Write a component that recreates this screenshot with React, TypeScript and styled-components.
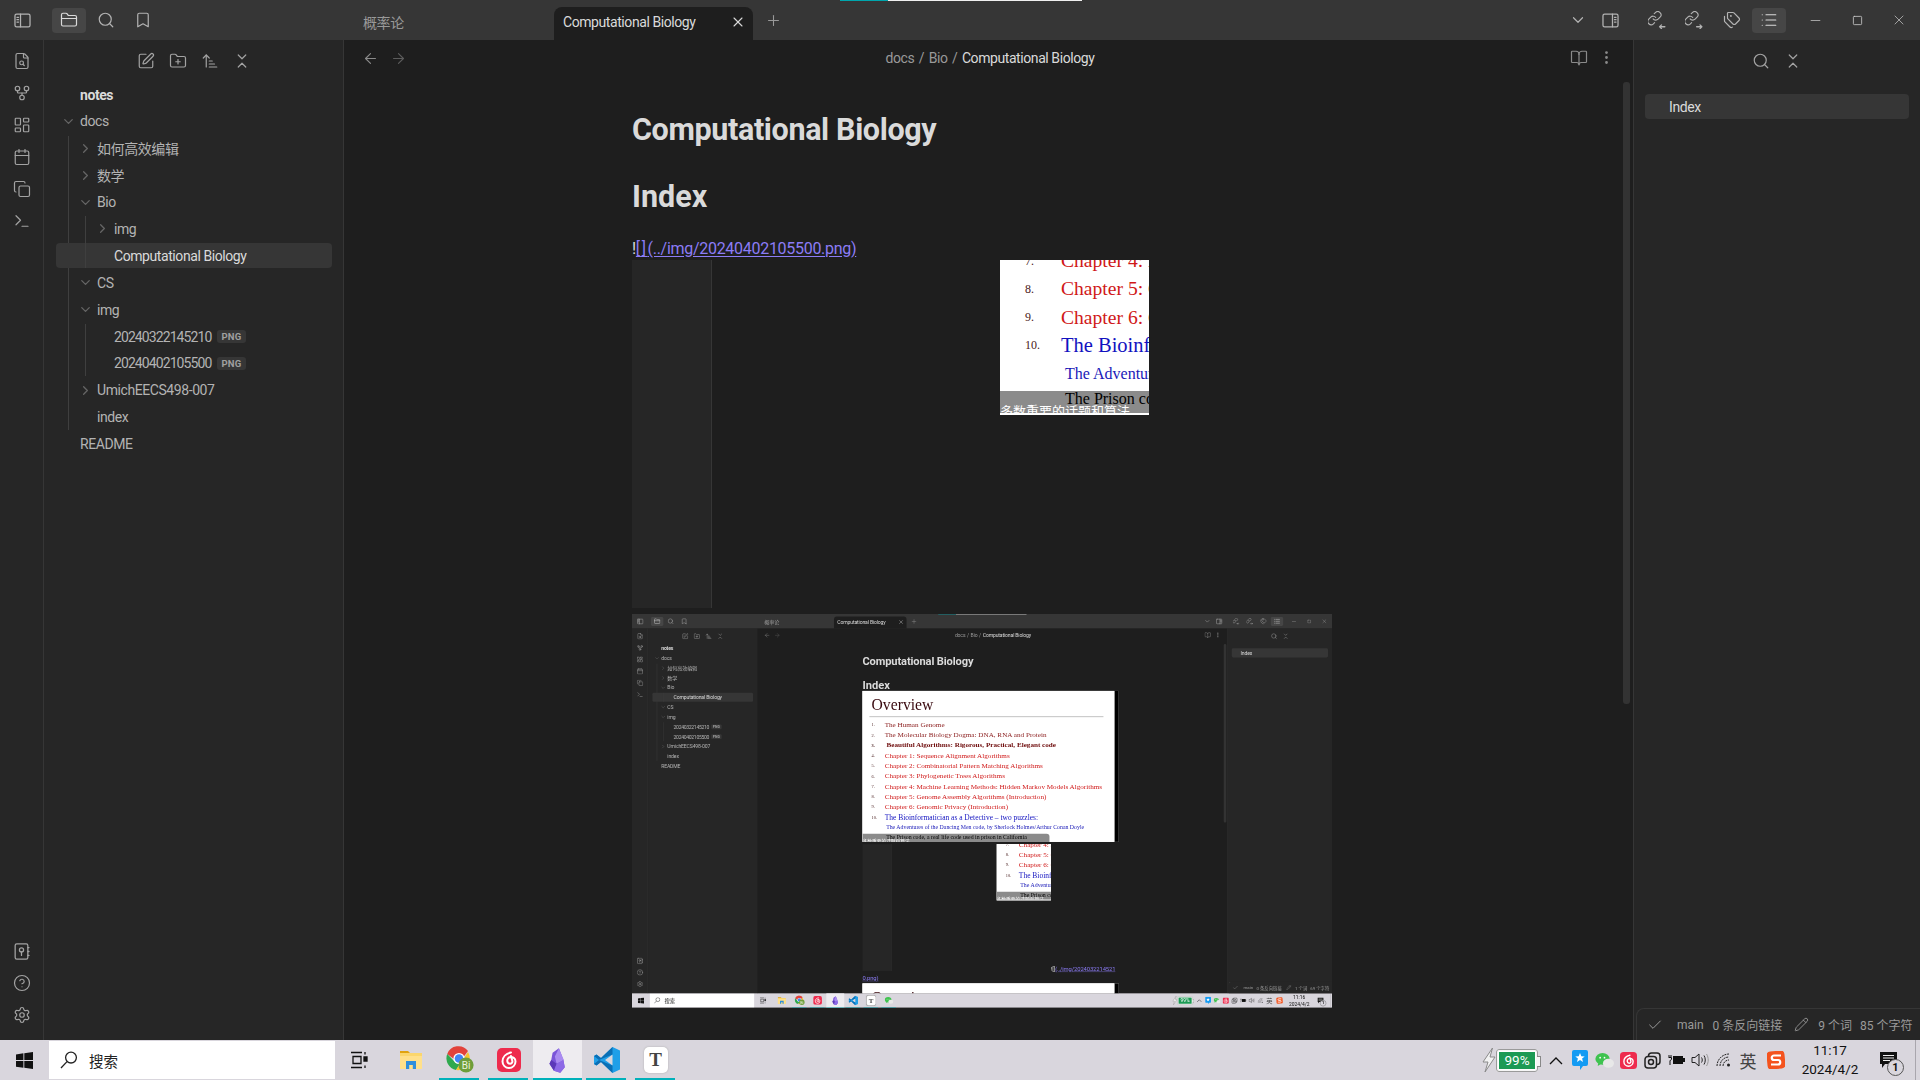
import React from "react";
import styled, { createGlobalStyle } from "styled-components";
import {
  ArrowLeft, ArrowRight, ArrowUpNarrowWide, Bookmark, BookOpen, Calendar, Check, ChevronDown, ChevronRight,
  ChevronsDownUp, CircleHelp, Copy, EllipsisVertical, FileSearch, FolderClosed, FolderPlus, GitFork,
  LayoutDashboard, List, Minus, Pencil, Plus, Search, Settings, Square, SquarePen, Tags, Terminal, X,
} from "lucide-react";

const SANS = `Roboto, "Noto Sans CJK SC", sans-serif`;

const Global = createGlobalStyle`
  html, body { margin: 0; padding: 0; background: #1e1e1e; overflow: hidden; }
  * { box-sizing: border-box; }
`;

/* ---------- window shell ---------- */
const WindowRoot = styled.div`
  width: 1920px; height: 1080px; display: flex; flex-direction: column; overflow: hidden; position: relative;
  font-family: ${SANS}; font-size: 14px; letter-spacing: -0.03em; color: #b3b3b3; background: #1e1e1e;
`;
const TitleBar = styled.header`
  height: 40px; flex: none; display: flex; align-items: flex-start; background: #363636; position: relative;
`;
const CaptureLine = styled.div`
  position: absolute; top: 0; left: 840px; width: 242px; height: 1px;
  background: linear-gradient(90deg, #00a6ad 0 48px, #f0f0f0 48px);
`;
const LeftTools = styled.div`
  width: 344px; flex: none; height: 40px; display: flex; align-items: center; gap: 3px;
`;
const RibbonToggle = styled.div`
  width: 44px; margin-right: 5px; display: flex; justify-content: center; color: #b3b3b3;
`;
const TopBtn = styled.div<{ $active?: boolean }>`
  width: 34px; height: 25px; border-radius: 4px; display: flex; align-items: center; justify-content: center;
  color: ${(p) => (p.$active ? "#dadada" : "#b3b3b3")}; background: ${(p) => (p.$active ? "#464646" : "transparent")};
`;
const Tab = styled.div<{ $active?: boolean }>`
  margin-top: 7px; height: 33px; display: flex; align-items: center; justify-content: space-between;
  padding: 0 7px 3px ${(p) => (p.$active ? "9px" : "19px")}; width: ${(p) => (p.$active ? "199px" : "210px")};
  border-radius: 8px 8px 0 0; background: ${(p) => (p.$active ? "#1e1e1e" : "transparent")};
  color: ${(p) => (p.$active ? "#dadada" : "#999")};
`;
const NewTab = styled.div`
  width: 40px; height: 40px; display: flex; align-items: center; justify-content: center; color: #999;
`;
const RightTools = styled.div`
  margin-left: auto; height: 40px; display: flex; align-items: center;
`;
const SmallBtn = styled.div<{ $gap?: number }>`
  width: 32px; display: flex; justify-content: center; color: #b3b3b3; margin-right: ${(p) => p.$gap ?? 0}px;
`;
const PaneBtns = styled.div`
  display: flex; gap: 3.5px; margin-right: 8px;
`;
const WinCtl = styled.div`
  width: 42px; height: 40px; display: flex; align-items: center; justify-content: center; color: #c8c8c8;
`;
const Body = styled.div`
  flex: 1; min-height: 0; display: flex; position: relative;
`;
const Ribbon = styled.nav`
  width: 44px; flex: none; background: #262626; border-right: 1px solid #363636;
  display: flex; flex-direction: column; padding: 5px 0 9px;
`;
const RibbonBtn = styled.div<{ $push?: boolean }>`
  height: 32px; width: 43px; display: flex; align-items: center; justify-content: center; color: #a3a3a3;
  margin-top: ${(p) => (p.$push ? "auto" : "0")};
`;
const FileSidebar = styled.aside`
  width: 300px; flex: none; background: #262626; border-right: 1px solid #363636; display: flex; flex-direction: column;
`;
const PaneHead = styled.div`
  height: 36px; flex: none; padding-top: 5px; display: flex; justify-content: center; color: #a3a3a3;
`;
const HeadBtn = styled.div`
  width: 32px; height: 32px; display: flex; align-items: center; justify-content: center;
`;
const Tree = styled.div`
  padding: 6px 11px 0 12px; display: flex; flex-direction: column;
`;
const Row = styled.div<{ $depth: number; $sel?: boolean; $root?: boolean }>`
  height: 25px; margin-bottom: 1.9px; flex: none; display: flex; align-items: center; border-radius: 4px; white-space: nowrap;
  padding-left: ${(p) => 3 + p.$depth * 17}px;
  background: ${(p) => (p.$sel ? "#363636" : "transparent")};
  color: ${(p) => (p.$sel || p.$root ? "#dadada" : "#b3b3b3")};
  font-weight: ${(p) => (p.$root ? 700 : 400)};
`;
const Arrow = styled.span`
  width: 18px; margin-right: 3px; flex: none; display: flex; justify-content: center; color: #666;
`;
const DigitName = styled.span`
  letter-spacing: -0.065em;
`;
const Badge = styled.span`
  margin-left: 6px; height: 13px; padding: 0 4px; border-radius: 3px; background: #363636; color: #a0a0a0;
  font-size: 9.5px; font-weight: 700; line-height: 13px; letter-spacing: 0.03em;
`;
const Group = styled.div<{ $x: number }>`
  position: relative; display: flex; flex-direction: column;
  &::before { content: ""; position: absolute; top: 0; bottom: 2px; left: ${(p) => p.$x}px; width: 1px; background: #3f3f3f; }
`;
const Main = styled.main`
  flex: 1; min-width: 0; display: flex; flex-direction: column; background: #1e1e1e;
`;
const ViewHead = styled.div`
  height: 36px; flex: none; display: flex; align-items: center; justify-content: space-between; padding: 0 12px 0 12px;
`;
const NavGroup = styled.div`
  display: flex; color: #8a8a8a;
`;
const NavBtn = styled.div<{ $dim?: boolean }>`
  width: 28px; display: flex; justify-content: center; color: ${(p) => (p.$dim ? "#5c5c5c" : "inherit")};
`;
const Crumbs = styled.div`
  display: flex; gap: 4.5px; margin-left: 3px; color: #999; align-items: center;
`;
const CrumbNow = styled.span`
  color: #dadada;
`;
const ViewBody = styled.div`
  flex: 1; min-height: 0; display: flex;
`;
const Scroller = styled.div`
  flex: 1; min-width: 0; overflow: hidden; display: flex; justify-content: center;
`;
const ScrollGutter = styled.div`
  width: 13px; flex: none; padding: 6px 3px 0 3px;
`;
const ScrollThumb = styled.div<{ $h: number }>`
  height: ${(p) => p.$h}px; border-radius: 3px; background: #333;
`;
const Doc = styled.article`
  width: 700px; flex: none; padding-top: 35px; display: flex; flex-direction: column;
`;
const H1 = styled.h1`
  margin: 0; font-size: 30.5px; line-height: 38px; font-weight: 700; color: #dadada; letter-spacing: -0.012em;
`;
const H2 = styled.h2`
  margin: 29px 0 0; font-size: 30.5px; line-height: 38px; font-weight: 700; color: #dadada; letter-spacing: 0;
`;
const Para = styled.p`
  margin: 0; font-size: 16px; line-height: 25px; color: #dadada; white-space: nowrap; letter-spacing: -0.018em;
`;
const LeadPara = styled(Para)`
  margin-top: 21px; line-height: 23px;
`;
const Brackets = styled.span`
  letter-spacing: 0.1em;
`;
const LinkText = styled.span`
  color: #8c7cf6; text-decoration: underline; text-underline-offset: 2px;
`;
const RightPane = styled.aside`
  width: 287px; flex: none; background: #262626; border-left: 1px solid #363636; display: flex; flex-direction: column;
`;
const OutlineList = styled.div`
  padding: 18px 11px 0 11px;
`;
const OutlineRow = styled.div`
  height: 25px; border-radius: 4px; background: #363636; color: #dadada; display: flex; align-items: center; padding-left: 24px;
`;
const StatusBar = styled.footer`
  position: absolute; right: 0; bottom: 0; width: 284px; height: 32px; border: 1px solid #363636; border-width: 1px 0 0 1px;
  border-top-left-radius: 8px; background: #262626; display: flex; align-items: center; font-size: 12px; color: #9a9a9a;
  padding-left: 10px; white-space: nowrap; letter-spacing: 0;
`;
const StatusCheck = styled.span`
  width: 30px; display: flex; color: #9a9a9a;
`;
const StatusItem = styled.span<{ $gap: number }>`
  display: flex; align-items: center; margin-right: ${(p) => p.$gap}px;
`;

/* ---------- slide picture ---------- */
const SlideFrame = styled.div<{ $top?: number }>`
  width: 703px; flex: none; margin-top: ${(p) => p.$top ?? 0}px; border-right: 12px solid #000; background: #fff;
`;
const SlideBody = styled.div`
  width: 691px; height: 414px; background: #fff; position: relative; overflow: hidden; padding: 14px 0 0 25px;
  font-family: "Liberation Serif", "Noto Sans CJK SC", serif; letter-spacing: 0;
`;
const SlideTitle = styled.div`
  font-size: 43px; line-height: 50px; color: #3a0a10;
`;
const SlideRule = styled.div`
  width: 642px; margin: 5px 0 7px -6px; height: 3px; background: #c8c8c8;
`;
const SlideLine = styled.div<{ $color: string; $bold?: boolean; $size?: number; $indent?: number; $over?: boolean }>`
  height: 28.2px; display: flex; align-items: center; white-space: pre; color: ${(p) => p.$color};
  font-size: ${(p) => p.$size ?? 19.6}px; font-weight: ${(p) => (p.$bold ? 700 : 400)};
  padding-left: ${(p) => p.$indent ?? 0}px; position: ${(p) => (p.$over ? "relative" : "static")}; z-index: ${(p) => (p.$over ? 2 : 0)};
  margin-top: ${(p) => (p.$over ? "-3px" : "0")};
`;
const SlideNum = styled.span`
  width: 36px; flex: none; font-size: 12px; color: #4a2020;
`;
const SlideStrip = styled.div`
  position: absolute; left: 0; bottom: 0; width: 513px; height: 22px; background: #8b8b8b; border-top-right-radius: 8px;
  color: #fff; font-size: 13px; line-height: 14px; padding-top: 14px; white-space: nowrap; overflow: hidden;
`;
const CropShot = styled.div`
  width: 517px; height: 348px; flex: none; display: flex; align-items: flex-start; align-self: flex-start;
`;
const CropPanel = styled.div`
  width: 80px; height: 348px; flex: none; background: #262626; border-right: 1px solid #363636;
`;
const CropWindow = styled.div`
  width: 149px; height: 155px; flex: none; margin-left: 288px; overflow: hidden; background: #fff;
`;
const CropInner = styled.div`
  margin: -261px 0 0 0;
`;
const InlineRow = styled.div`
  height: 354.5px; flex: none; display: flex; align-items: flex-end; margin-top: 6px;
`;
const MiniViewport = styled.div`
  width: 700px; height: 394px; margin-top: 6px; flex: none; overflow: hidden;
`;
const MiniScale = styled.div`
  width: 1920px; height: 1080px; transform: scale(0.3646); transform-origin: 0 0; filter: blur(0.35px);
`;

/* ---------- taskbar ---------- */
const Taskbar = styled.footer`
  height: 40px; flex: none; background: #d9d6dd; display: flex; align-items: stretch; color: #111; letter-spacing: 0; overflow: hidden;
`;
const WinBtn = styled.div`
  width: 49px; flex: none; display: flex; align-items: center; justify-content: center;
`;
const SearchBox = styled.div`
  width: 286px; flex: none; margin: 1px 0; background: #fff; display: flex; align-items: center; padding-left: 11px; gap: 11px;
  font-size: 14.5px; color: #222;
`;
const TaskView = styled.div`
  width: 48px; flex: none; display: flex; align-items: center; justify-content: center; margin-right: 3px;
`;
const AppSlot = styled.div<{ $run?: boolean; $active?: boolean }>`
  width: 49px; flex: none; display: flex; align-items: center; justify-content: center; position: relative;
  background: ${(p) => (p.$active ? "#eeecf0" : "transparent")};
  &::after {
    content: ""; position: absolute; bottom: 0; height: 2px; background: #00b1ba;
    display: ${(p) => (p.$run ? "block" : "none")}; left: ${(p) => (p.$active ? "0" : "4px")}; right: ${(p) => (p.$active ? "0" : "5px")};
  }
`;
const TyporaTile = styled.div`
  width: 24px; height: 26px; border-radius: 5px; background: #fff; box-shadow: 0 0 2px #aaa; display: flex; align-items: center; justify-content: center;
  font: 700 19px "Liberation Serif", serif; color: #444;
`;
const Tray = styled.div`
  margin-left: auto; display: flex; align-items: center;
`;
const BatteryWrap = styled.div`
  width: 48px; display: flex; align-items: center;
`;
const BatteryCase = styled.div`
  width: 42px; height: 23px; border: 2px solid #f6f6f6; outline: 1px solid #9a9a9a; outline-offset: -1px; border-radius: 3px; background: #fff; padding: 1px; position: relative;
  &::after { content: ""; position: absolute; right: -5px; top: 5px; width: 3px; height: 9px; background: #f6f6f6; border: 1px solid #888; border-left: 0; }
`;
const BatteryFill = styled.div`
  width: 100%; height: 100%; background: #1c9a54; color: #fff; font-size: 13.5px; line-height: 17px; text-align: center;
`;
const TrayItem = styled.div<{ $gap?: number }>`
  width: 24px; flex: none; display: flex; align-items: center; justify-content: center; margin-left: ${(p) => p.$gap ?? 0}px;
`;
const ImeGlyph = styled.span`
  font-size: 17px; color: #444;
`;
const Clock = styled.div`
  width: 76px; margin-left: 4px; flex: none; text-align: center; font-size: 13.5px; line-height: 19px; color: #111;
`;
const Notify = styled.div`
  width: 40px; flex: none; display: flex; align-items: center; justify-content: center; position: relative;
`;
const NotifyCount = styled.span`
  position: absolute; left: 19px; top: 7px; width: 17px; height: 17px; border: 1px solid #555; border-radius: 50%; font-size: 11px; font-weight: 700;
  display: flex; align-items: center; justify-content: center; background: #d9d6dd;
`;
const TrayEnd = styled.div`
  width: 5px; margin-left: 7px; height: 100%; border-left: 1px solid #a9a6ad;
`;

/* ---------- drawings ---------- */
const SidebarIcon = ({ right }: { right?: boolean }) => (
  <svg width="19" height="19" viewBox="0 0 24 24" fill="none" stroke="currentColor" strokeWidth="1.6" strokeLinecap="round">
    <rect x="2.5" y="4" width="19" height="16" rx="2" />
    {right ? (
      <path d="M14.5 4v16M17 8h2M17 11h2M17 14h2" />
    ) : (
      <path d="M9.5 4v16M5 8h2M5 11h2M5 14h2" />
    )}
  </svg>
);
const LinkArrow = ({ out }: { out?: boolean }) => (
  <svg width="18" height="18" viewBox="0 0 24 24" fill="none" stroke="currentColor" strokeWidth="1.7" strokeLinecap="round" strokeLinejoin="round">
    <g transform="translate(-2 -1) scale(0.88)">
      <path d="M10 13a5 5 0 0 0 7.54.54l3-3a5 5 0 0 0-7.07-7.07l-1.72 1.71" />
      <path d="M14 11a5 5 0 0 0-7.54-.54l-3 3a5 5 0 0 0 7.07 7.07l1.71-1.71" />
    </g>
    {out ? <path d="M15.500 21h7M20 18.500l2.500 2.500-2.500 2.500" /> : <path d="M15.500 21h7M18 18.500 15.500 21l2.500 2.500" />}
  </svg>
);
const VaultIcon = () => (
  <svg width="19" height="19" viewBox="0 0 24 24" fill="none" stroke="currentColor" strokeWidth="1.6" strokeLinecap="round">
    <rect x="4" y="2.5" width="16" height="19" rx="2" />
    <circle cx="12" cy="10" r="2.6" />
    <path d="M12 12.6V17M20 7h1.5M20 12h1.5M20 17h1.5" />
  </svg>
);
const WinLogo = () => (
  <svg width="17" height="17" viewBox="0 0 17 17" fill="#111">
    <path d="M0 2.4 7.4 1.3v6.8H0zM8.3 1.2 17 0v8.1H8.3zM0 9h7.4v6.8L0 14.7zM8.3 9H17v8l-8.7-1.2z" />
  </svg>
);
const MirrorSearch = () => (
  <svg width="18" height="18" viewBox="0 0 18 18" fill="none" stroke="#222" strokeWidth="1.3">
    <circle cx="11" cy="6.6" r="5.4" />
    <path d="M7 10.6 1 17" />
  </svg>
);
const TaskViewIcon = () => (
  <svg width="17" height="18" viewBox="0 0 17 18" fill="none" stroke="#111" strokeWidth="1.3">
    <path d="M0 1.5h11M0 16.5h11M2 5.5h8v7H2z" />
    <path d="M14 1v2.5M14 14.5V17" />
    <path d="M13 6h3v4h-3z" fill="#111" />
  </svg>
);
const FolderApp = () => (
  <svg width="24" height="24" viewBox="0 0 24 24">
    <path d="M1 3h8l2 2h-10z" fill="#e0a30f" />
    <path d="M1 5h22v16H1z" fill="#fbd66c" />
    <path d="M1 8h22v13H1z" fill="#ffe08a" />
    <path d="M7 13h10v8h-3.2v-4h-3.6v4H7z" fill="#2f8fdc" />
  </svg>
);
const ChromeApp = () => (
  <svg width="28" height="28" viewBox="0 0 28 28">
    <path d="M1.2 8A12 12 0 0 1 22 5 l-6 8H8z" fill="#e2423a" />
    <path d="M1.2 8A12 12 0 0 0 10 24l5-8-7-1z" fill="#2fa94e" />
    <path d="M22 6A12 12 0 0 1 10 24l6-9z" fill="#f7c52c" />
    <circle cx="13" cy="12.5" r="5.6" fill="#fff" />
    <circle cx="13" cy="12.5" r="4.3" fill="#4285f4" />
    <circle cx="20" cy="19" r="7.6" fill="#6e9e3a" />
    <text x="20" y="23" fontSize="10" fontFamily="Roboto, sans-serif" fill="#e8f2dc" textAnchor="middle">Bi</text>
  </svg>
);
const NeteaseApp = ({ size = 24 }: { size?: number }) => (
  <svg width={size} height={size} viewBox="0 0 24 24" fill="none">
    <rect width="24" height="24" rx="5" fill="#ee2b4d" />
    <path d="M14 4.5C9 5.5 5.5 9 5.5 13.500a6.500 6.500 0 0 0 13 0c0-3-2.500-4.500-4.700-4.500a3.700 3.700 0 0 0-3.500 4.200c.2 1.700 1.500 2.600 2.800 2.600 1.500 0 2.400-1.300 2.300-2.600L14 8" stroke="#fff" strokeWidth="2" strokeLinecap="round" />
  </svg>
);
const ObsidianApp = () => (
  <svg width="18" height="25" viewBox="0 0 20 27">
    <path d="M11 0 4 5 2.500 13 .5 17l5 8 7 2 5-6-1.500-8L13 5z" fill="#7a55d8" />
    <path d="M11 0 6.500 9l2 8 8-4-3.500-8z" fill="#a98bf0" />
    <path d="M2.500 13 .5 17l5 8 3-8z" fill="#5b39b8" />
    <path d="M8.500 17l-3 8 7 2 5-6-1.500-8z" fill="#8d6ae6" />
  </svg>
);
const VSCodeApp = () => (
  <svg width="26" height="26" viewBox="0 0 26 26">
    <path d="M18.500 0 7 11 2.500 7.500 0 9v8l2.500 1.500L7 15l11.500 11L26 22.500v-19zM18.500 7.500v11L11 13z" fill="#1f9fe8" fillRule="evenodd" />
    <path d="M18.500 0 7 11 2.500 7.500 0 9l5 4 13.500-5.500zM0 17l2.500 1.500L7 15l11.500 11v-7.500L5 13z" fill="#0a6fb5" />
  </svg>
);
const WeChatApp = ({ size = 22 }: { size?: number }) => (
  <svg width={size} height={size} viewBox="0 0 24 24">
    <ellipse cx="9.500" cy="10" rx="9" ry="7.500" fill="#3fc34f" />
    <path d="M4 15 3.500 19l4-2.500z" fill="#3fc34f" />
    <ellipse cx="17" cy="15.500" rx="7" ry="5.800" fill="#e8e8e8" />
    <circle cx="6.500" cy="8.500" r="1.100" fill="#fff" />
    <circle cx="12" cy="8.500" r="1.100" fill="#fff" />
  </svg>
);
const Bolt = () => (
  <svg width="14" height="26" viewBox="0 0 14 26" fill="#f2f2f2" stroke="#8a8a8a" strokeWidth="1">
    <path d="M10.500 1 1 15h5L3 25 13 10H8z" />
  </svg>
);
const CaretUp = () => (
  <svg width="14" height="9" viewBox="0 0 14 9" fill="none" stroke="#111" strokeWidth="1.3"><path d="M1 8l6-6 6 6" /></svg>
);
const BlueBubble = () => (
  <svg width="16" height="20" viewBox="0 0 16 20">
    <path d="M2 0h12a2 2 0 0 1 2 2v12a2 2 0 0 1-2 2h-3l-3 4v-4H2a2 2 0 0 1-2-2V2a2 2 0 0 1 2-2z" fill="#149bf3" />
    <path d="M8 3l1.300 3.200 3.400.200-2.600 2.200.900 3.300L8 10l-3 1.900.900-3.300L3.300 6.400l3.400-.200z" fill="#fff" />
  </svg>
);
const OverlapIcon = () => (
  <svg width="17" height="17" viewBox="0 0 17 17" fill="none" stroke="#222" strokeWidth="1.500">
    <rect x="4.500" y="1" width="11.500" height="11.500" rx="3" />
    <rect x="1" y="4.500" width="11.500" height="11.500" rx="3" fill="#d9d6dd" />
    <circle cx="7" cy="10" r="2.500" />
  </svg>
);
const PlugIcon = () => (
  <svg width="17" height="12" viewBox="0 0 17 12">
    <rect x="5" y="2" width="10" height="8" fill="#111" />
    <rect x="15" y="4" width="2" height="4" fill="#111" />
    <path d="M1 1v2M3 1v2M.500 3.500h3V5c0 1-1 1.500-1.500 1.500V11" stroke="#111" fill="none" />
  </svg>
);
const VolumeIcon = () => (
  <svg width="18" height="16" viewBox="0 0 18 16" fill="none" stroke="#222" strokeWidth="1">
    <path d="M1 5.500h3L8 2v12l-4-3.500H1z" />
    <path d="M10.500 5.500c1 1.500 1 3.500 0 5M13 3.500c1.700 2.700 1.700 6.300 0 9" />
    <path d="M15.500 2c2.300 3.700 2.300 8.300 0 12" stroke="#999" />
  </svg>
);
const WifiIcon = () => (
  <svg width="16" height="14" viewBox="0 0 16 14" fill="none" stroke="#222" strokeWidth="1">
    <path d="M1 13C1 6.500 6.500 1 13 1M4 13c0-5 4-9 9-9M7 13c0-3.300 2.700-6 6-6" strokeDasharray="2 0.800" />
    <circle cx="12.500" cy="12" r="1.500" fill="#222" stroke="none" />
  </svg>
);
const SogouIcon = () => (
  <svg width="18" height="18" viewBox="0 0 18 18">
    <rect width="18" height="18" rx="4" fill="#f4531e" transform="rotate(-6 9 9)" />
    <path d="M14 4.500H7a2.200 2.200 0 0 0 0 4.500h4a2.200 2.200 0 0 1 0 4.500H4" stroke="#fff" strokeWidth="2.200" fill="none" />
  </svg>
);
const NotifyIcon = () => (
  <svg width="17" height="17" viewBox="0 0 17 17">
    <path d="M0 0h17v12H5l-3 4v-4H0z" fill="#111" />
    <path d="M3 3.500h11M3 6h11M3 8.500h7" stroke="#eee" strokeWidth="1" />
  </svg>
);

/* ---------- content pieces ---------- */
type SlideItem = { n?: string; t: string; c: string; bold?: boolean; size?: number; indent?: number; over?: boolean };
const slideItems: SlideItem[] = [
  { n: "1.", t: "The Human Genome", c: "#8a1c1c" },
  { n: "2.", t: "The Molecular Biology Dogma: DNA, RNA and Protein", c: "#8a1c1c" },
  { n: "3.", t: " Beautiful Algorithms: Rigorous, Practical, Elegant code", c: "#6e0b0b", bold: true },
  { n: "4.", t: "Chapter 1: Sequence Alignment Algorithms", c: "#d01818" },
  { n: "5.", t: "Chapter 2: Combinatorial Pattern Matching Algorithms", c: "#d01818" },
  { n: "6.", t: "Chapter 3: Phylogenetic Trees Algorithms", c: "#d01818" },
  { n: "7.", t: "Chapter 4: Machine Learning Methods: Hidden Markov Models Algorithms", c: "#d01818" },
  { n: "8.", t: "Chapter 5: Genome Assembly Algorithms (Introduction)", c: "#d01818" },
  { n: "9.", t: "Chapter 6: Genomic Privacy (Introduction)", c: "#d01818" },
  { n: "10.", t: "The Bioinformatician as a Detective – two puzzles:", c: "#1212c0", size: 20.5 },
  { t: "The Adventures of the Dancing Men code, by Sherlock Holmes/Arthur Conan Doyle", c: "#1a1ab8", size: 16, indent: 40 },
  { t: "The Prison code, a real life code used in prison in California", c: "#000", size: 16, indent: 40, over: true },
];

const Slide = () => (
  <SlideBody>
    <SlideTitle>Overview</SlideTitle>
    <SlideRule />
    {slideItems.map((it) => (
      <SlideLine key={it.t} $color={it.c} $bold={it.bold} $size={it.size} $indent={it.indent} $over={it.over}>
        {it.n && <SlideNum>{it.n}</SlideNum>}
        {it.t}
      </SlideLine>
    ))}
    <SlideStrip>多数重要的话题和算法</SlideStrip>
  </SlideBody>
);

const Crop = () => (
  <CropShot>
    <CropPanel />
    <CropWindow>
      <CropInner>
        <Slide />
      </CropInner>
    </CropWindow>
  </CropShot>
);

const MiniDoc = () => (
  <Doc>
    <H1>Computational Biology</H1>
    <H2>Index</H2>
    <SlideFrame $top={-5}>
      <Slide />
    </SlideFrame>
    <InlineRow>
      <Crop />
      <Para>
        ![]<LinkText>(../img/2024032214521</LinkText>
      </Para>
    </InlineRow>
    <Para>
      <LinkText>0.png)</LinkText>
    </Para>
    <SlideFrame $top={2}>
      <Slide />
    </SlideFrame>
  </Doc>
);

const OuterDoc = () => (
  <Doc>
    <H1>Computational Biology</H1>
    <H2>Index</H2>
    <LeadPara>
      !<LinkText><Brackets>[]</Brackets>(../img/20240402105500.png)</LinkText>
    </LeadPara>
    <Crop />
    <MiniViewport>
      <MiniScale>
        <AppWindow mini />
      </MiniScale>
    </MiniViewport>
  </Doc>
);

const Chev = ({ open }: { open?: boolean }) => (
  <Arrow>{open ? <ChevronDown size={15} strokeWidth={2} /> : <ChevronRight size={15} strokeWidth={2} />}</Arrow>
);
const NoChev = () => <Arrow />;

const FileTree = ({ mini }: { mini?: boolean }) => (
  <Tree>
    <Row $depth={0} $root><NoChev />notes</Row>
    <Row $depth={0}><Chev open />docs</Row>
    <Group $x={12}>
      <Row $depth={1}><Chev />如何高效编辑</Row>
      <Row $depth={1}><Chev />数学</Row>
      <Row $depth={1}><Chev open />Bio</Row>
      <Group $x={29}>
        {!mini && <Row $depth={2}><Chev />img</Row>}
        <Row $depth={2} $sel><NoChev />Computational Biology</Row>
      </Group>
      <Row $depth={1}><Chev open />CS</Row>
      <Row $depth={1}><Chev open />img</Row>
      <Group $x={29}>
        <Row $depth={2}><NoChev /><DigitName>20240322145210</DigitName><Badge>PNG</Badge></Row>
        <Row $depth={2}><NoChev /><DigitName>20240402105500</DigitName><Badge>PNG</Badge></Row>
      </Group>
      <Row $depth={1}><Chev />UmichEECS498-007</Row>
      <Row $depth={1}><NoChev />index</Row>
    </Group>
    <Row $depth={0}><NoChev />README</Row>
  </Tree>
);

const I = { size: 18, strokeWidth: 1.6 };

function AppWindow({ mini }: { mini?: boolean }) {
  return (
    <WindowRoot>
      <TitleBar>
        <CaptureLine />
        <LeftTools>
          <RibbonToggle><SidebarIcon /></RibbonToggle>
          <TopBtn $active><FolderClosed {...I} /></TopBtn>
          <TopBtn><Search {...I} /></TopBtn>
          <TopBtn><Bookmark {...I} /></TopBtn>
        </LeftTools>
        <Tab>概率论</Tab>
        <Tab $active>Computational Biology<X size={16} strokeWidth={1.6} /></Tab>
        <NewTab><Plus size={17} strokeWidth={1.5} /></NewTab>
        <RightTools>
          <SmallBtn><ChevronDown {...I} /></SmallBtn>
          <SmallBtn $gap={13.5}><SidebarIcon right /></SmallBtn>
          <PaneBtns>
            <TopBtn><LinkArrow /></TopBtn>
            <TopBtn><LinkArrow out /></TopBtn>
            <TopBtn><Tags {...I} /></TopBtn>
            <TopBtn $active><List {...I} /></TopBtn>
          </PaneBtns>
          <WinCtl><Minus size={15} strokeWidth={1.2} /></WinCtl>
          <WinCtl><Square size={11} strokeWidth={1.8} /></WinCtl>
          <WinCtl><X size={16} strokeWidth={1.1} /></WinCtl>
        </RightTools>
      </TitleBar>
      <Body>
        <Ribbon>
          <RibbonBtn><FileSearch {...I} /></RibbonBtn>
          <RibbonBtn><GitFork {...I} /></RibbonBtn>
          <RibbonBtn><LayoutDashboard {...I} /></RibbonBtn>
          <RibbonBtn><Calendar {...I} /></RibbonBtn>
          <RibbonBtn><Copy {...I} /></RibbonBtn>
          <RibbonBtn><Terminal {...I} /></RibbonBtn>
          <RibbonBtn $push><VaultIcon /></RibbonBtn>
          <RibbonBtn><CircleHelp {...I} /></RibbonBtn>
          <RibbonBtn><Settings {...I} /></RibbonBtn>
        </Ribbon>
        <FileSidebar>
          <PaneHead>
            <HeadBtn><SquarePen {...I} /></HeadBtn>
            <HeadBtn><FolderPlus {...I} /></HeadBtn>
            <HeadBtn><ArrowUpNarrowWide {...I} /></HeadBtn>
            <HeadBtn><ChevronsDownUp {...I} /></HeadBtn>
          </PaneHead>
          <FileTree mini={mini} />
        </FileSidebar>
        <Main>
          <ViewHead>
            <NavGroup>
              <NavBtn><ArrowLeft size={17} strokeWidth={1.6} /></NavBtn>
              <NavBtn $dim><ArrowRight size={17} strokeWidth={1.6} /></NavBtn>
            </NavGroup>
            <Crumbs>
              <span>docs</span><span>/</span><span>Bio</span><span>/</span>
              <CrumbNow>Computational Biology</CrumbNow>
            </Crumbs>
            <NavGroup>
              <NavBtn><BookOpen {...I} /></NavBtn>
              <NavBtn><EllipsisVertical size={17} strokeWidth={2} /></NavBtn>
            </NavGroup>
          </ViewHead>
          <ViewBody>
            <Scroller>{mini ? <MiniDoc /> : <OuterDoc />}</Scroller>
            <ScrollGutter><ScrollThumb $h={mini ? 490 : 622} /></ScrollGutter>
          </ViewBody>
        </Main>
        <RightPane>
          <PaneHead>
            <HeadBtn><Search {...I} /></HeadBtn>
            <HeadBtn><ChevronsDownUp {...I} /></HeadBtn>
          </PaneHead>
          <OutlineList>
            <OutlineRow>Index</OutlineRow>
          </OutlineList>
        </RightPane>
        <StatusBar>
          <StatusCheck><Check size={16} strokeWidth={1.5} /></StatusCheck>
          <StatusItem $gap={9}>main</StatusItem>
          <StatusItem $gap={12}>0 条反向链接</StatusItem>
          <StatusItem $gap={9}><Pencil size={15} strokeWidth={1.4} /></StatusItem>
          <StatusItem $gap={8}>{mini ? "1 个词" : "9 个词"}</StatusItem>
          <StatusItem $gap={0}>{mini ? "69 个字符" : "85 个字符"}</StatusItem>
        </StatusBar>
      </Body>
      <Taskbar>
        <WinBtn><WinLogo /></WinBtn>
        <SearchBox><MirrorSearch />搜索</SearchBox>
        <TaskView><TaskViewIcon /></TaskView>
        <AppSlot><FolderApp /></AppSlot>
        <AppSlot $run><ChromeApp /></AppSlot>
        <AppSlot $run><NeteaseApp /></AppSlot>
        <AppSlot $run $active><ObsidianApp /></AppSlot>
        <AppSlot $run><VSCodeApp /></AppSlot>
        <AppSlot $run><TyporaTile>T</TyporaTile></AppSlot>
        {mini && <AppSlot $run><WeChatApp size={24} /></AppSlot>}
        <Tray>
          <Bolt />
          <BatteryWrap><BatteryCase><BatteryFill>99%</BatteryFill></BatteryCase></BatteryWrap>
          <TrayItem><CaretUp /></TrayItem>
          <TrayItem><BlueBubble /></TrayItem>
          <TrayItem><WeChatApp size={19} /></TrayItem>
          <TrayItem><NeteaseApp size={17} /></TrayItem>
          <TrayItem><OverlapIcon /></TrayItem>
          <TrayItem><PlugIcon /></TrayItem>
          <TrayItem><VolumeIcon /></TrayItem>
          <TrayItem><WifiIcon /></TrayItem>
          <TrayItem><ImeGlyph>英</ImeGlyph></TrayItem>
          <TrayItem $gap={4}><SogouIcon /></TrayItem>
          <Clock>{mini ? "11:16" : "11:17"}<br />2024/4/2</Clock>
          <Notify><NotifyIcon /><NotifyCount>1</NotifyCount></Notify>
          <TrayEnd />
        </Tray>
      </Taskbar>
    </WindowRoot>
  );
}

export default function App() {
  return (
    <>
      <Global />
      <AppWindow />
    </>
  );
}
